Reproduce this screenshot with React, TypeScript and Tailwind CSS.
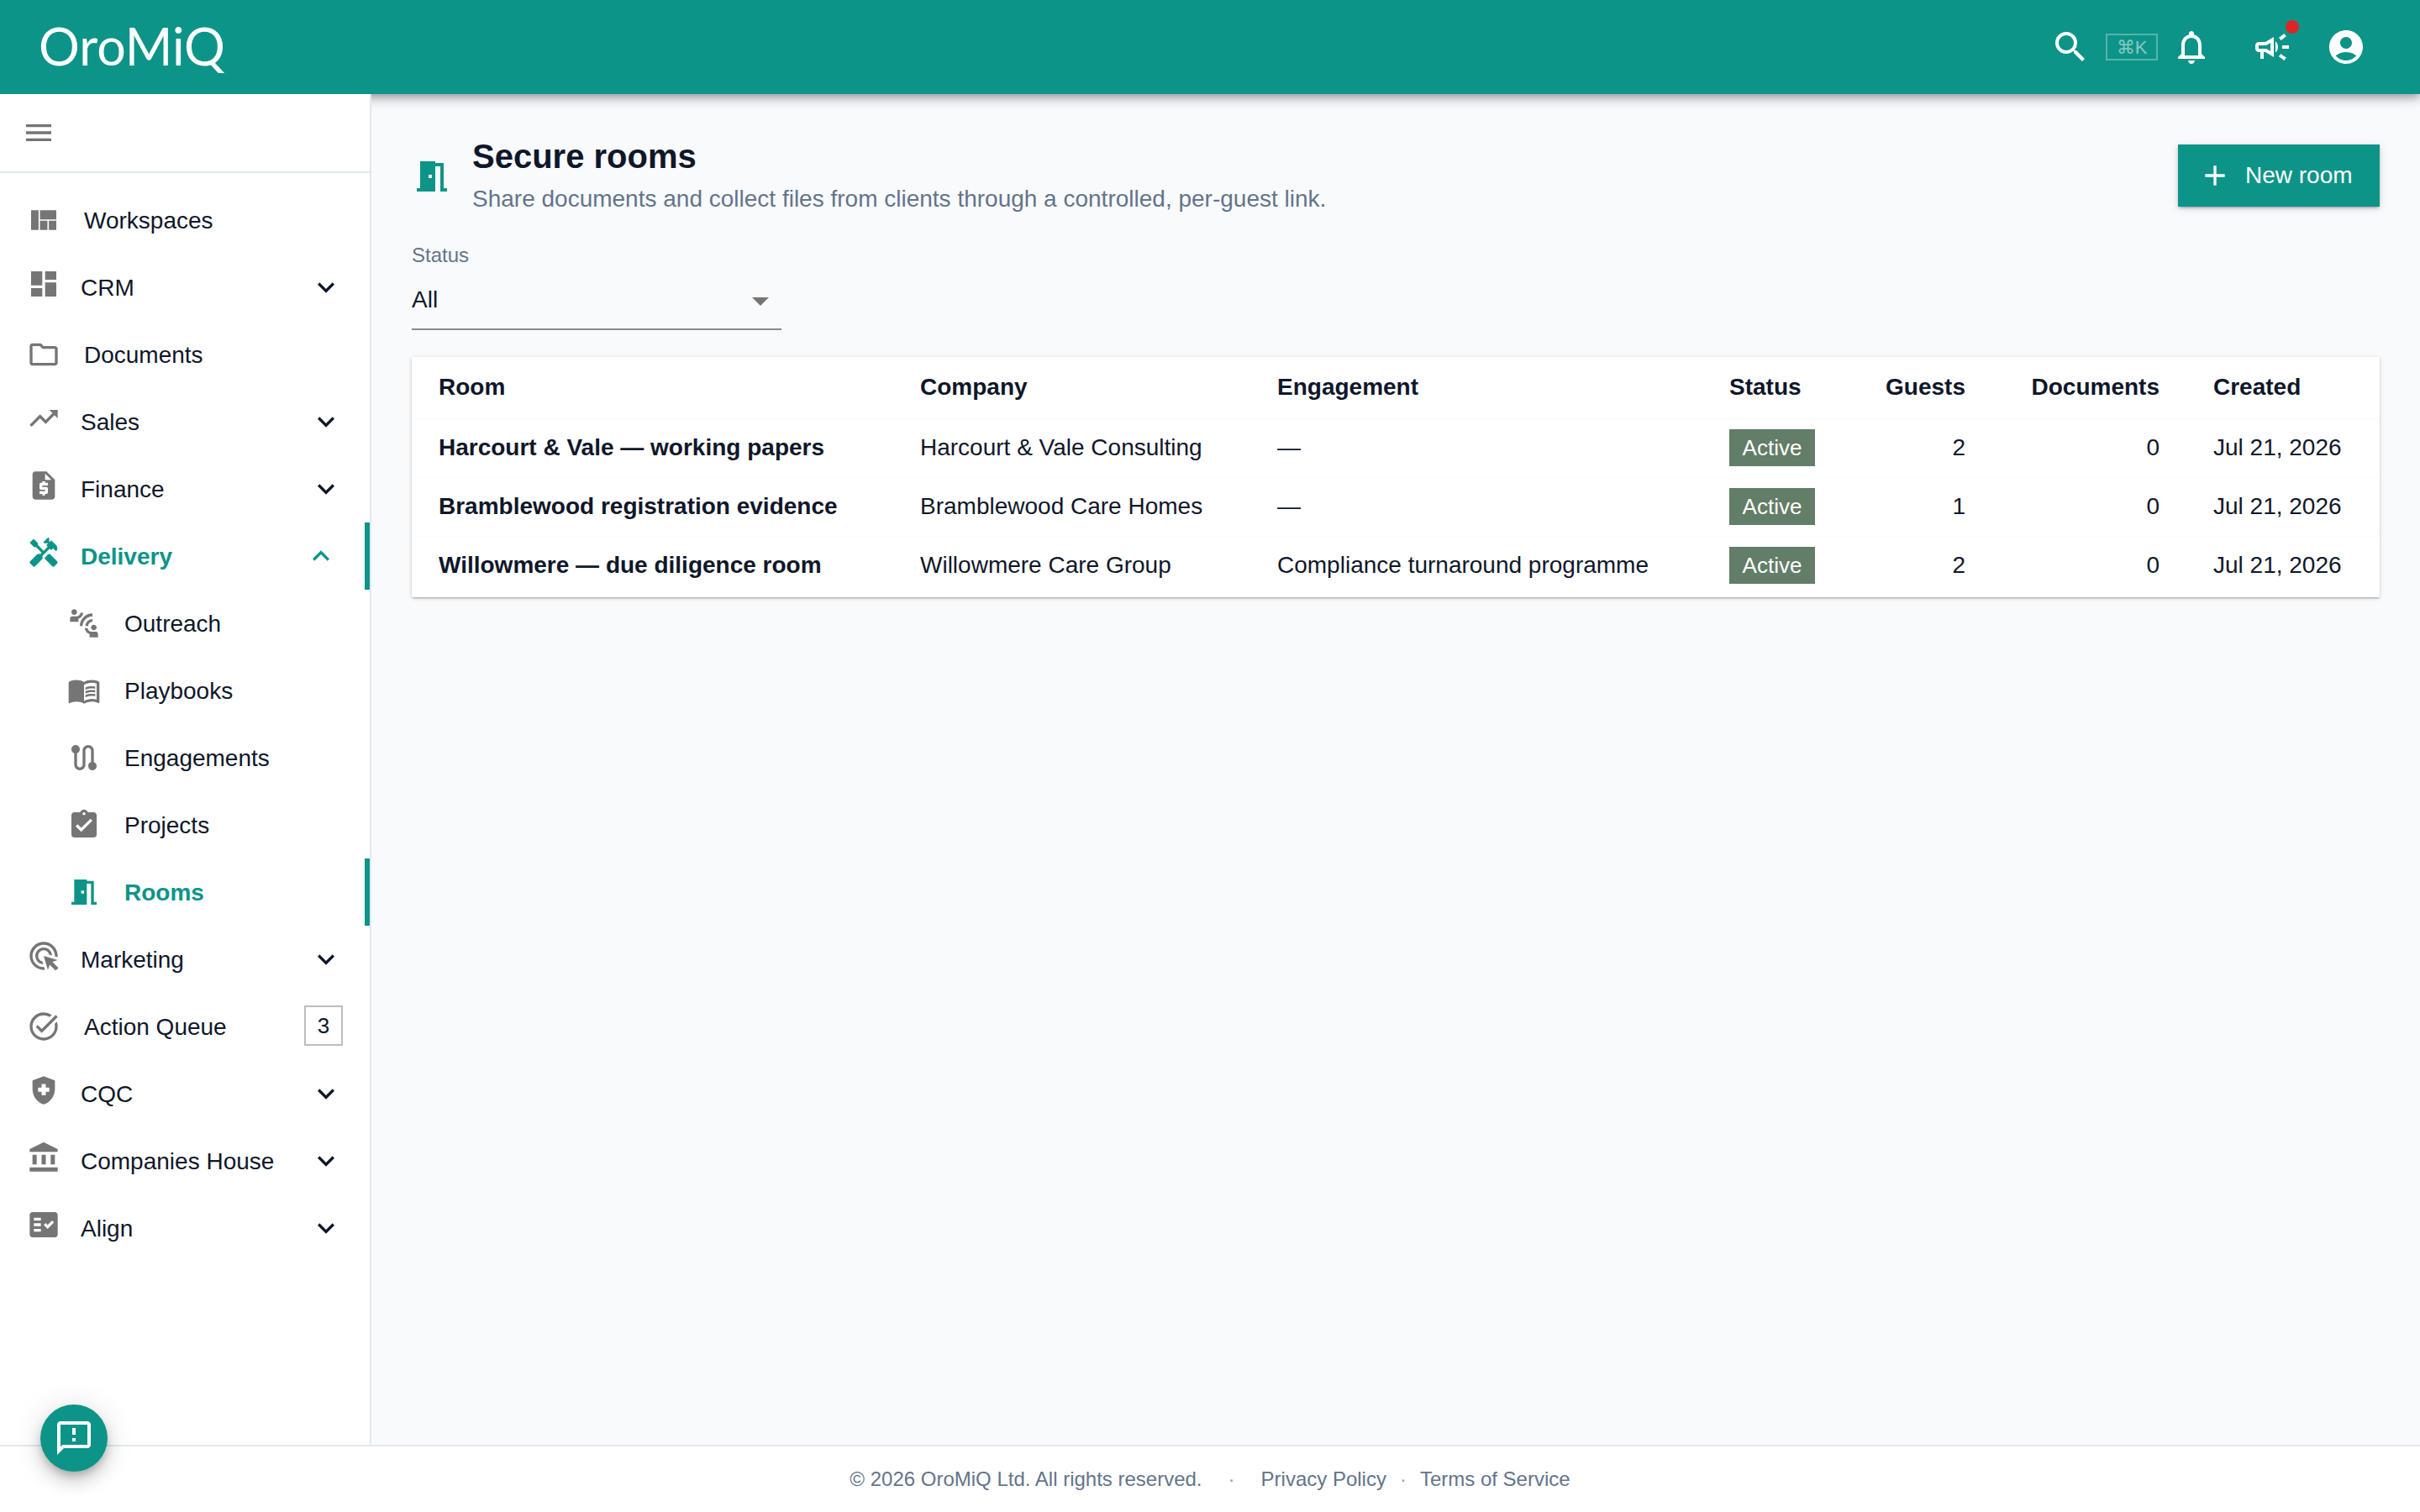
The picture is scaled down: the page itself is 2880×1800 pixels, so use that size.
import React from 'react';
import type { IconType } from 'react-icons';
import {
  MdAccountBalance,
  MdAccountCircle,
  MdAdd,
  MdAdsClick,
  MdArrowDropDown,
  MdAssignmentTurnedIn,
  MdConnectWithoutContact,
  MdDashboard,
  MdExpandLess,
  MdExpandMore,
  MdFactCheck,
  MdHandyman,
  MdHealthAndSafety,
  MdMeetingRoom,
  MdMenu,
  MdMenuBook,
  MdOutlineCampaign,
  MdOutlineFeedback,
  MdOutlineFolder,
  MdOutlineNotifications,
  MdOutlineTaskAlt,
  MdRequestQuote,
  MdRoute,
  MdSearch,
  MdTrendingUp,
  MdViewQuilt,
} from 'react-icons/md';

interface NavEntry {
  label: string;
  icon: IconType;
  expandable?: boolean;
  open?: boolean;
  active?: boolean;
  sub?: boolean;
  badge?: string;
}

const navItems: NavEntry[] = [
  { label: 'Workspaces', icon: MdViewQuilt },
  { label: 'CRM', icon: MdDashboard, expandable: true },
  { label: 'Documents', icon: MdOutlineFolder },
  { label: 'Sales', icon: MdTrendingUp, expandable: true },
  { label: 'Finance', icon: MdRequestQuote, expandable: true },
  { label: 'Delivery', icon: MdHandyman, expandable: true, open: true, active: true },
  { label: 'Outreach', icon: MdConnectWithoutContact, sub: true },
  { label: 'Playbooks', icon: MdMenuBook, sub: true },
  { label: 'Engagements', icon: MdRoute, sub: true },
  { label: 'Projects', icon: MdAssignmentTurnedIn, sub: true },
  { label: 'Rooms', icon: MdMeetingRoom, sub: true, active: true },
  { label: 'Marketing', icon: MdAdsClick, expandable: true },
  { label: 'Action Queue', icon: MdOutlineTaskAlt, badge: '3' },
  { label: 'CQC', icon: MdHealthAndSafety, expandable: true },
  { label: 'Companies House', icon: MdAccountBalance, expandable: true },
  { label: 'Align', icon: MdFactCheck, expandable: true },
];

const rooms = [
  {
    room: 'Harcourt & Vale — working papers',
    company: 'Harcourt & Vale Consulting',
    engagement: '—',
    guests: 2,
  },
  {
    room: 'Bramblewood registration evidence',
    company: 'Bramblewood Care Homes',
    engagement: '—',
    guests: 1,
  },
  {
    room: 'Willowmere — due diligence room',
    company: 'Willowmere Care Group',
    engagement: 'Compliance turnaround programme',
    guests: 2,
  },
];

const NavRow: React.FC<{ item: NavEntry }> = ({ item }) => {
  const Icon = item.icon;
  const tone = item.active ? 'text-[#0d9488]' : 'text-[#757575]';

  return (
    <div className={`relative flex h-[80px] items-center pr-[32px] ${item.sub ? 'pl-[80px]' : 'pl-[32px]'}`}>
      <Icon className={`${tone} ${item.expandable ? 'mb-[8px]' : ''} shrink-0`} size={40} />
      <span
        className={`flex-1 pt-[2px] text-[28px] ${item.expandable ? 'ml-[24px]' : 'ml-[28px]'} ${
          item.active ? 'font-bold text-[#0d9488]' : 'text-[#0f172a]'
        }`}
      >
        {item.label}
      </span>
      {item.expandable && !item.open && <MdExpandMore className="text-[#0f172a]" size={40} />}
      {item.open && <MdExpandLess className="mr-[6px] text-[#0d9488]" size={40} />}
      {item.badge && (
        <span className="-mt-[2px] flex h-[48px] w-[46px] items-center justify-center border-2 border-[#bdbdbd] text-[26px] text-[#0f172a]">
          {item.badge}
        </span>
      )}
      {item.active && <span className="absolute bottom-0 right-0 top-0 w-[6px] bg-[#0d9488]" />}
    </div>
  );
};

const Header: React.FC = () => (
  <header className="relative flex h-[112px] shrink-0 items-center bg-[#0d9488] pl-[46px] pr-[64px] shadow-[0_4px_8px_-2px_rgba(0,0,0,0.2),0_8px_10px_0_rgba(0,0,0,0.14),0_2px_20px_0_rgba(0,0,0,0.12)]">
    <span className="mb-[4px] font-['Lato',sans-serif] text-[61px] font-normal leading-none text-white">OroMiQ</span>
    <div className="ml-auto flex items-center text-white">
      <MdSearch size={48} />
      <span className="ml-[18px] flex h-[32px] w-[62px] items-center justify-center border-2 border-white/30 text-[22px] text-white/50">
        ⌘K
      </span>
      <MdOutlineNotifications className="ml-[16px]" size={48} />
      <span className="relative ml-[48px]">
        <MdOutlineCampaign size={48} />
        <span className="absolute right-[-8px] top-[-8px] h-[16px] w-[16px] rounded-full bg-[#dc2626]" />
      </span>
      <MdAccountCircle className="ml-[40px]" size={48} />
    </div>
  </header>
);

const Sidebar: React.FC = () => (
  <aside className="relative z-10 w-[442px] shrink-0 border-r-2 border-[#e2e8f0] bg-white">
    <div className="flex h-[94px] items-center border-b-2 border-[#e2e8f0] pl-[26px]">
      <MdMenu className="text-[#757575]" size={40} />
    </div>
    <nav className="pt-[16px]">
      {navItems.map((item) => (
        <NavRow key={item.label} item={item} />
      ))}
    </nav>
  </aside>
);

const RoomsTable: React.FC = () => (
  <div className="mt-[32px] bg-white pb-[3px] shadow-[0_2px_2px_-1px_rgba(0,0,0,0.2),0_1px_2px_0_rgba(0,0,0,0.14),0_1px_6px_0_rgba(0,0,0,0.12)]">
    <table className="w-full table-fixed border-collapse text-[28px] text-[#0f172a]">
      <colgroup>
        <col className="w-[573px]" />
        <col className="w-[425px]" />
        <col className="w-[538px]" />
        <col className="w-[184px]" />
        <col className="w-[161px]" />
        <col className="w-[231px]" />
        <col className="w-[230px]" />
      </colgroup>
      <thead>
        <tr className="h-[73px] border-b border-[#f8fafc] font-bold">
          <th className="px-[32px] text-left">Room</th>
          <th className="px-[32px] text-left">Company</th>
          <th className="px-[32px] text-left">Engagement</th>
          <th className="px-[32px] text-left">Status</th>
          <th className="px-[32px] text-right">Guests</th>
          <th className="px-[32px] text-right">Documents</th>
          <th className="px-[32px] text-left">Created</th>
        </tr>
      </thead>
      <tbody>
        {rooms.map((row) => (
          <tr key={row.room} className="h-[70px] border-b border-[#f8fafc] last:border-b-0">
            <td className="whitespace-nowrap px-[32px] font-bold">{row.room}</td>
            <td className="whitespace-nowrap px-[32px]">{row.company}</td>
            <td className="whitespace-nowrap px-[32px]">{row.engagement}</td>
            <td className="px-[32px]">
              <span className="flex h-[44px] w-[102px] items-center justify-center bg-[#627d68] text-[26px] text-white">
                Active
              </span>
            </td>
            <td className="px-[32px] text-right">{row.guests}</td>
            <td className="px-[32px] text-right">0</td>
            <td className="whitespace-nowrap px-[32px]">Jul 21, 2026</td>
          </tr>
        ))}
      </tbody>
    </table>
  </div>
);

const Footer: React.FC = () => (
  <footer className="flex h-[80px] shrink-0 items-center justify-center border-t-2 border-[#e2e8f0] bg-white text-[24px] text-[#64748b]">
    <span>© 2026 OroMiQ Ltd. All rights reserved.</span>
    <span className="mx-[31px] text-[#94a3b8]">·</span>
    <span>Privacy Policy</span>
    <span className="mx-[16px] text-[#94a3b8]">·</span>
    <span>Terms of Service</span>
  </footer>
);

export default function App() {
  return (
    <div className="relative flex h-screen w-full flex-col overflow-hidden bg-[#f8fafc] font-['Liberation_Sans',Arial,sans-serif]">
      <Header />
      <div className="flex min-h-0 flex-1">
        <Sidebar />
        <main className="flex-1 px-[48px] pt-[48px]">
          <div className="flex items-start">
            <MdMeetingRoom className="mt-[26px] shrink-0 text-[#0d9488]" size={48} />
            <div className="ml-[24px] flex-1">
              <h1 className="mt-[1px] text-[40px] font-bold leading-[50px] text-[#0f172a]">Secure rooms</h1>
              <p className="mt-[5px] text-[28px] leading-[42px] text-[#64748b]">
                Share documents and collect files from clients through a controlled, per-guest link.
              </p>
            </div>
            <button className="mt-[12px] flex h-[74px] w-[240px] items-center bg-[#0d9488] pl-[24px] text-[28px] text-white shadow-[0_3px_2px_-2px_rgba(0,0,0,0.2),0_2px_4px_0_rgba(0,0,0,0.14),0_2px_10px_0_rgba(0,0,0,0.12)]">
              <MdAdd className="mr-[16px]" size={40} />
              New room
            </button>
          </div>
          <div className="mt-[30px] w-[440px]">
            <div className="text-[24px] leading-[32px] text-[#64748b]">Status</div>
            <div className="flex h-[73px] items-center justify-between border-b-2 border-[#8a8a8a] pr-[1px] pt-[3px]">
              <span className="text-[28px] text-[#0f172a]">All</span>
              <MdArrowDropDown className="mt-[2px] text-[#757575]" size={48} />
            </div>
          </div>
          <RoomsTable />
        </main>
      </div>
      <Footer />
      <button className="absolute bottom-[48px] left-[48px] z-20 flex h-[80px] w-[80px] items-center justify-center rounded-full bg-[#0d9488] text-white shadow-[0_6px_10px_-2px_rgba(0,0,0,0.2),0_12px_20px_0_rgba(0,0,0,0.14),0_2px_36px_0_rgba(0,0,0,0.12)]">
        <MdOutlineFeedback size={48} />
      </button>
    </div>
  );
}
